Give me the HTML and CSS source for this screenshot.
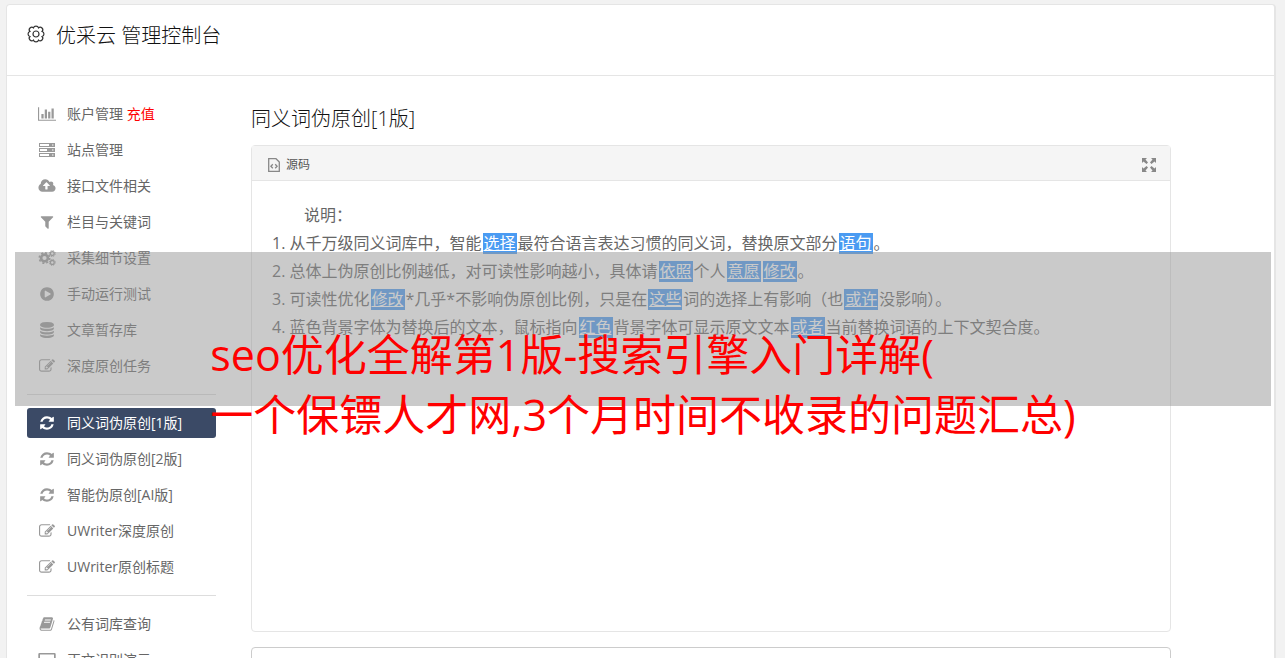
FILE: index.html
```html
<!DOCTYPE html>
<html lang="zh-CN">
<head>
<meta charset="utf-8">
<title>优采云 管理控制台</title>
<link rel="stylesheet" href="styles.css">
</head>
<body>
<svg class="defs" aria-hidden="true">
  <symbol id="chart" viewBox="0 0 2048 1792"><path d="M640 896v512h-256v-512h256zm384-512v1024h-256v-1024h256zm1024 1152v128h-2048v-1536h128v1408h1920zm-640-896v768h-256v-768h256zm384-384v1152h-256v-1152h256z"/></symbol>
  <symbol id="server" viewBox="0 0 18 16"><path fill-rule="evenodd" d="M1 1h16v4H1zM2 2v2h9v-2zM1 6h16v4H1zM2 7v2h7v-2zM1 11h16v4H1zM2 12v2h9v-2zM14 2.500v1h1.500v-1zM14 7.500v1h1.500v-1zM14 12.500v1h1.500v-1z"/></symbol>
  <symbol id="cloud" viewBox="-64 0 1920 1792"><path d="M1216 864q0-14-9-23l-352-352q-9-9-23-9t-23 9l-351 351q-10 12-10 24 0 14 9 23t23 9h224v352q0 13 9.500 22.500t22.500 9.500h192q13 0 22.500-9.500t9.500-22.500v-352h224q13 0 22.500-9.500t9.500-22.500zm640 288q0 159-112.500 271.500t-271.500 112.500h-1088q-185 0-316.500-131.500t-131.500-316.500q0-130 70-240t188-165q-2-30-2-43 0-212 150-362t362-150q156 0 285.500 87t188.500 231q71-62 166-62 106 0 181 75t75 181q0 76-41 138 130 31 213.500 135.500t83.500 238.500z"/></symbol>
  <symbol id="filter" viewBox="0 0 1792 1792"><path d="M1595 295q17 41-14 70l-493 493v742q0 42-39 59-13 5-25 5-27 0-45-19l-256-256q-19-19-19-45v-486l-493-493q-31-29-14-70 17-39 59-39h1280q42 0 59 39z"/></symbol>
  <symbol id="cogs" viewBox="0 0 18 16"><g fill="none" stroke="currentColor"><circle cx="6.500" cy="8" r="3.400" stroke-width="2.600"/><circle cx="6.500" cy="8" r="5.200" stroke-width="1.600" stroke-dasharray="2.040 2.040"/><circle cx="14.300" cy="3.600" r="1.900" stroke-width="1.300"/><circle cx="14.300" cy="3.600" r="3" stroke-width="1" stroke-dasharray="1.180 1.180"/><circle cx="14.300" cy="12.400" r="1.900" stroke-width="1.300"/><circle cx="14.300" cy="12.400" r="3" stroke-width="1" stroke-dasharray="1.180 1.180"/></g></symbol>
  <symbol id="play" viewBox="0 0 1792 1792"><path d="M896 128q209 0 385.500 103t279.500 279.500 103 385.500-103 385.500-279.500 279.500-385.500 103-385.500-103-279.500-279.500-103-385.500 103-385.500 279.500-279.500 385.500-103zm384 823q32-18 32-55t-32-55l-544-320q-31-19-64-1-32 19-32 56v640q0 37 32 56 16 8 32 8 17 0 32-9z"/></symbol>
  <symbol id="database" viewBox="0 0 1792 1792"><path d="M896 768q237 0 443-43t325-127v170q0 69-103 128t-280 93.500-385 34.500-385-34.500-280-93.500-103-128v-170q119 84 325 127t443 43zm0 768q237 0 443-43t325-127v170q0 69-103 128t-280 93.500-385 34.500-385-34.500-280-93.500-103-128v-170q119 84 325 127t443 43zm0-384q237 0 443-43t325-127v170q0 69-103 128t-280 93.500-385 34.500-385-34.500-280-93.500-103-128v-170q119 84 325 127t443 43zm0-1152q208 0 385 34.500t280 93.500 103 128v128q0 69-103 128t-280 93.500-385 34.500-385-34.500-280-93.500-103-128v-128q0-69 103-128t280-93.500 385-34.500z"/></symbol>
  <symbol id="edit" viewBox="0 0 1792 1792"><path d="M888 1184l116-116-152-152-116 116v56h96v96h56zm440-720q-16-16-33 1l-350 350q-17 17-1 33t33-1l350-350q17-17 1-33zm80 594v190q0 119-84.500 203.500t-203.500 84.500h-832q-119 0-203.500-84.500t-84.500-203.500v-832q0-119 84.500-203.500t203.500-84.500h832q63 0 117 25 15 7 18 23 3 17-9 29l-49 49q-14 14-32 8-23-6-45-6h-832q-66 0-113 47t-47 113v832q0 66 47 113t113 47h832q66 0 113-47t47-113v-126q0-13 9-22l64-64q15-15 35-7t20 29zm-96-738l288 288-672 672h-288v-288zm444 132l-92 92-288-288 92-92q28-28 68-28t68 28l152 152q28 28 28 68t-28 68z"/></symbol>
  <symbol id="refresh" viewBox="0 0 1792 1792"><path d="M1639 1056q0 5-1 7-64 268-268 434.500t-478 166.500q-146 0-282.500-55t-243.500-157l-129 129q-19 19-45 19t-45-19-19-45v-448q0-26 19-45t45-19h448q26 0 45 19t19 45-19 45l-137 137q71 66 161 102t187 36q134 0 250-65t186-179q11-17 53-117 8-23 30-23h192q13 0 22.500 9.500t9.500 22.500zm25-800v448q0 26-19 45t-45 19h-448q-26 0-45-19t-19-45 19-45l138-138q-148-137-349-137-134 0-250 65t-186 179q-11 17-53 117-8 23-30 23h-199q-13 0-22.500-9.500t-9.500-22.500v-7q65-268 270-434.500t480-166.500q146 0 284 55.500t245 156.500l130-129q19-19 45-19t45 19 19 45z"/></symbol>
  <symbol id="book" viewBox="0 0 1792 1792"><path d="M1703 478q40 57 18 129l-275 906q-19 64-76.500 107.500t-122.500 43.500h-923q-77 0-148.500-53.500t-99.500-131.500q-24-67-2-127 0-4 3-27t4-37q1-8-3-21.500t-3-19.500q2-11 8-21t16.500-23.500 16.500-23.500q23-38 45-91.500t30-91.500q3-10 .5-30t-.5-28q3-11 17-28t17-23q21-36 42-92t25-90q1-9-2.500-32t.5-28q4-13 22-30.500t22-22.500q19-26 42.500-84.500t27.500-96.500q1-8-3-25.500t-2-26.500q2-8 9-18t18-23 17-21q8-12 16.500-30.500t15-35 16-36 19.500-32 26.500-23.500 36-11.500 47.500 5.500l-1 3q38-9 51-9h761q74 0 114 56t18 130l-274 906q-36 119-71.500 153.500t-128.500 34.500h-869q-27 0-38 15-11 16-1 43 24 70 144 70h923q29 0 56-15.500t35-41.500l300-987q7-22 5-57 38 15 59 43zm-1064 2q-4 13 2 22.500t20 9.500h608q13 0 25.500-9.500t16.500-22.500l21-64q4-13-2-22.500t-20-9.500h-608q-13 0-25.500 9.500t-16.500 22.500zm-83 256q-4 13 2 22.500t20 9.500h608q13 0 25.500-9.500t16.500-22.500l21-64q4-13-2-22.500t-20-9.500h-608q-13 0-25.500 9.500t-16.500 22.500z"/></symbol>
  <symbol id="laptop" viewBox="0 0 18 16"><path fill-rule="evenodd" d="M1.500 1h15a1.200 1.200 0 0 1 1.200 1.200V13H.3V2.200A1.200 1.200 0 0 1 1.500 1zM2 2.500V11h14V2.500zM0 13.500h18V15H0z"/></symbol>
</svg>
<div class="panel">
  <header class="panel-head">
    <svg class="gear" viewBox="-9 -9 18 18" aria-hidden="true"><g fill="none" stroke="currentColor" stroke-width="1.200"><path d="M-2.500-6.100A2.550 2.300 0 0 1 2.500-6.100A2.550 2.550 0 0 1 6.100-2.500A2.300 2.550 0 0 1 6.100 2.500A2.550 2.550 0 0 1 2.500 6.100A2.550 2.300 0 0 1-2.500 6.100A2.550 2.550 0 0 1-6.100 2.500A2.300 2.550 0 0 1-6.100-2.500A2.550 2.550 0 0 1-2.500-6.100Z"/><circle r="3"/></g></svg>
    <h1>优采云 管理控制台</h1>
  </header>
  <div class="panel-body">
    <nav class="side">
      <a href="#"><svg><use href="#chart"/></svg><span>账户管理 <em>充值</em></span></a>
      <a href="#"><svg><use href="#server"/></svg>站点管理</a>
      <a href="#"><svg><use href="#cloud"/></svg>接口文件相关</a>
      <a href="#"><svg><use href="#filter"/></svg>栏目与关键词</a>
      <a href="#"><svg><use href="#cogs"/></svg>采集细节设置</a>
      <a href="#"><svg><use href="#play"/></svg>手动运行测试</a>
      <a href="#"><svg><use href="#database"/></svg>文章暂存库</a>
      <a href="#"><svg><use href="#edit"/></svg>深度原创任务</a>
      <hr>
      <a href="#" class="active"><svg><use href="#refresh"/></svg>同义词伪原创[1版]</a>
      <a href="#"><svg><use href="#refresh"/></svg>同义词伪原创[2版]</a>
      <a href="#"><svg><use href="#refresh"/></svg>智能伪原创[AI版]</a>
      <a href="#"><svg><use href="#edit"/></svg>UWriter深度原创</a>
      <a href="#"><svg><use href="#edit"/></svg>UWriter原创标题</a>
      <hr>
      <a href="#"><svg><use href="#book"/></svg>公有词库查询</a>
      <a href="#"><svg><use href="#laptop"/></svg>正文识别演示</a>
    </nav>
    <main class="main">
      <h2>同义词伪原创[1版]</h2>
      <section class="editor">
        <div class="toolbar">
          <button type="button"><svg class="source" viewBox="0 0 12 14" aria-hidden="true"><path d="M.7.700h7.300l3.300 3.300v9.300H.7zM4.800 6.300 2.900 8.300l1.900 2M7.200 6.300l1.900 2-1.900 2" fill="none" stroke="currentColor" stroke-width="1.300"/></svg>源码</button>
          <button type="button" aria-label="全屏"><svg class="expand" viewBox="0 0 14 14" aria-hidden="true"><path fill="currentColor" d="M0 0h5L3.500 1.500 6 4.500 4.500 6 1.500 3.500 0 5zM14 0v5l-1.500-1.500L9.500 6 8 4.500l2.500-3L9 0zM0 14V9l1.500 1.500L4.500 8 6 9.500l-2.500 3L5 14zM14 14H9l1.500-1.500L8 9.500 9.500 8l3 2.500L14 9z"/></svg></button>
        </div>
        <div class="content">
          <p>说明：</p>
          <div>1. 从千万级同义词库中，智能<a href="#">选择</a>最符合语言表达习惯的同义词，替换原文部分<a href="#">语句</a>。</div>
          <div>2. 总体上伪原创比例越低，对可读性影响越小，具体请<a href="#">依照</a>个人<a href="#">意愿</a><a href="#">修改</a>。</div>
          <div>3. 可读性优化<a href="#">修改</a>*几乎*不影响伪原创比例，只是在<a href="#">这些</a>词的选择上有影响（也<a href="#">或许</a>没影响）。</div>
          <div>4. 蓝色背景字体为替换后的文本，鼠标指向<a href="#">红色</a>背景字体可显示原文文本<a href="#">或者</a>当前替换词语的上下文契合度。</div>
        </div>
      </section>
      <textarea class="result" aria-label="结果"></textarea>
    </main>
  </div>
</div>
<div class="banner">
  <p>seo优化全解第1版-搜索引擎入门详解(<br>一个保镖人才网,3个月时间不收录的问题汇总)</p>
</div>
</body>
</html>
```
FILE: styles.css
```css
* { box-sizing: border-box; }
body {
  margin: 0;
  height: 100vh;
  overflow: hidden;
  position: relative;
  padding: 4px 9px 0 6px;
  background: #f2f2f2;
  color: #666;
  font: 400 14px/20px "Open Sans", "Noto Sans CJK SC", sans-serif;
}
h1, h2, p { margin: 0; }
h1, h2 { font-size: 20px; line-height: 28px; font-weight: 300; color: #111; }
button { display: flex; align-items: center; padding: 0; border: 0; background: none; font: inherit; font-size: 12px; color: #555; }
.defs { display: none; }
.panel {
  min-height: 100%;
  background: #fff;
  border: 1px solid #e5e5e5;
  border-right-width: 2px;
  border-radius: 4px;
}
.panel-head {
  display: flex;
  align-items: flex-start;
  gap: 11px;
  padding: 17px 20px 25px;
  border-bottom: 1px solid #e5e5e5;
}
.gear { width: 18px; height: 18px; margin-top: 3px; color: #333; }
.panel-body { display: flex; gap: 35px; padding: 23px 103px 0 20px; }
.side { flex: 0 0 189px; display: flex; flex-direction: column; gap: 6px; }
.side a {
  display: flex;
  align-items: center;
  gap: 11px;
  height: 30px;
  padding-left: 11px;
  border-radius: 3px;
  color: #666;
  text-decoration: none;
}
.side svg { width: 18px; height: 16px; fill: #999; color: #999; }
.side em { font-style: normal; color: #f00; }
.side hr { width: 100%; height: 1px; margin: 7px 0; border: 0; background: #ddd; }
.side .active { background: #3b4a66; color: #fff; }
.side .active svg { fill: #fff; }
.main { flex: 1; min-width: 0; padding-top: 6px; }
.editor { margin: 12px 0 15px; border: 1px solid #e5e5e5; border-radius: 4px; }
.toolbar {
  display: flex;
  justify-content: space-between;
  align-items: center;
  height: 35px;
  padding: 3px 14px 0 16px;
  background: #f5f5f5;
  border-bottom: 1px solid #e5e5e5;
}
.source { width: 12px; height: 14px; margin-right: 6px; color: #888; }
.expand { width: 14px; height: 14px; color: #888; }
.content { min-height: 450px; padding: 20px; font-size: 16px; line-height: 28px; }
.content p { text-indent: 32px; }
.content a {
  display: inline-block;
  margin: 0 1px;
  padding: 0 1px;
  line-height: 21px;
  background: #4a9bf2;
  color: #fff;
}
.result { display: block; width: 100%; height: 200px; border: 1px solid #ccc; border-radius: 4px; resize: none; }
.banner {
  position: absolute;
  top: 252px;
  left: 15px;
  right: 14px;
  height: 154px;
  padding-top: 73px;
  background: rgba(150, 150, 150, 0.5);
  text-align: center;
}
.banner p {
  display: inline-block;
  text-align: left;
  white-space: nowrap;
  font-size: 43px;
  line-height: 60px;
  color: #f00;
}
```
